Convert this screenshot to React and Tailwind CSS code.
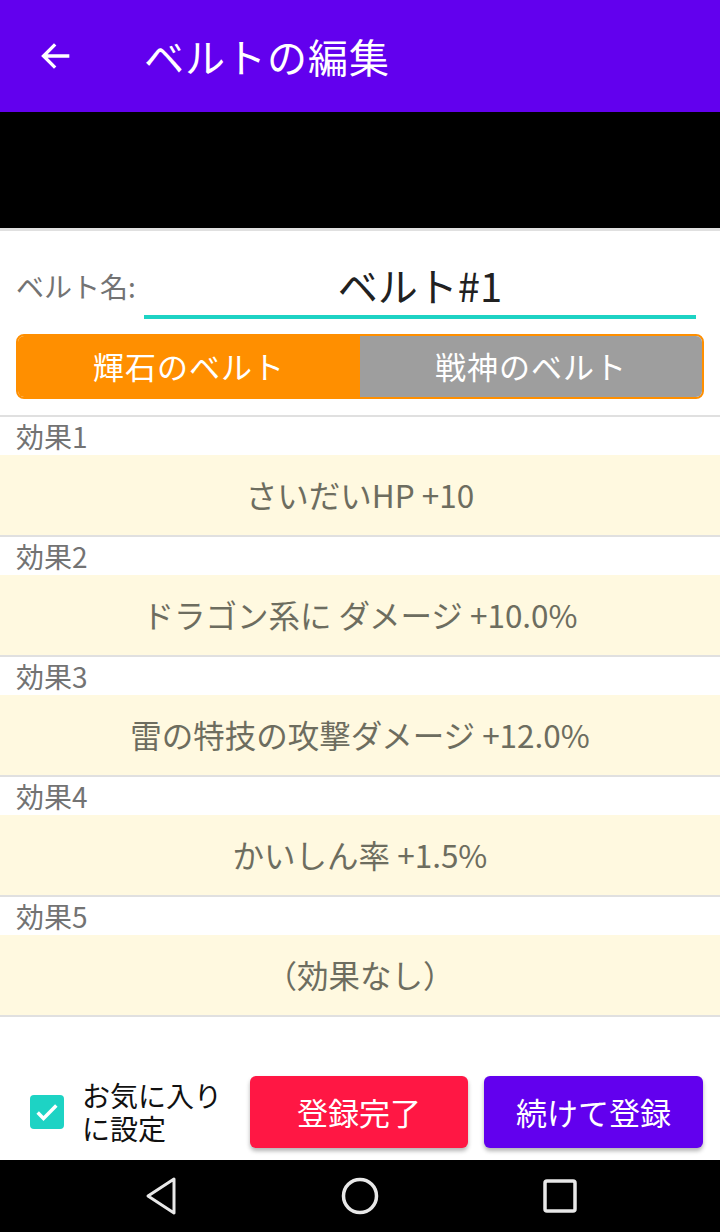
import React from "react";

const effects = [
  { label: "効果1", value: "さいだいHP +10" },
  { label: "効果2", value: "ドラゴン系に ダメージ +10.0%" },
  { label: "効果3", value: "雷の特技の攻撃ダメージ +12.0%" },
  { label: "効果4", value: "かいしん率 +1.5%" },
  { label: "効果5", value: "（効果なし）" },
];

const font = { fontFamily: '"Noto Sans CJK JP", Roboto, sans-serif' };

export default function App() {
  return (
    <div className="w-[720px] h-[1232px] flex flex-col bg-white overflow-hidden" style={font}>
      {/* App bar */}
      <div className="h-[112px] bg-[#6200ee] flex items-center shrink-0">
        <svg className="ml-[36px]" width="40" height="40" viewBox="0 0 24 24" fill="none" stroke="white" strokeWidth="2">
          <path d="M20 12H4.5M11.5 5l-7 7 7 7" />
        </svg>
        <div className="ml-[68px] text-white text-[40px] leading-none tracking-[1px]">ベルトの編集</div>
      </div>

      {/* Ad area */}
      <div className="h-[116px] bg-black shrink-0" />
      <div className="h-[3px] bg-[#e0e0e0] shrink-0" />

      {/* Name */}
      <div className="flex items-end px-[16px] mt-[28px]">
        <div className="text-[28px] text-[#737373] pb-[12px] w-[128px]">ベルト名:</div>
        <div className="flex-1 border-b-[4px] border-[#1dd3c4] mr-[8px] pb-[4px] text-center text-[40px] text-[#212121] leading-[52px]">
          ベルト#1
        </div>
      </div>

      {/* Toggle */}
      <div className="mx-[16px] mt-[15px] h-[65px] flex rounded-[8px] border-[2px] border-[#ff8f00] overflow-hidden text-[31px] text-white tracking-[1px]">
        <div className="flex-1 bg-[#ff8f00] flex items-center justify-center">輝石のベルト</div>
        <div className="flex-1 bg-[#9e9e9e] flex items-center justify-center">戦神のベルト</div>
      </div>

      <div className="h-[2px] bg-[#e0e0e0] mt-[16px]" />

      {/* Effects */}
      {effects.map((e) => (
        <div key={e.label} className="flex flex-col">
          <div className="h-[38px] px-[16px] flex items-center text-[28px] text-[#737373]">{e.label}</div>
          <div className="h-[80px] bg-[#fff9e0] flex items-center justify-center text-[31.5px] text-[#6d6d5f]">{e.value}</div>
          <div className="h-[2px] bg-[#e0e0e0]" />
        </div>
      ))}

      <div className="flex-1" />

      {/* Bottom actions */}
      <div className="flex items-center px-[16px] pb-[12px] gap-[16px]">
        <div className="flex items-center w-[218px] shrink-0">
          <div className="ml-[14px] w-[34px] h-[34px] shrink-0 rounded-[4px] bg-[#1dd3c4] flex items-center justify-center">
            <svg width="28" height="28" viewBox="0 0 24 24" fill="none" stroke="white" strokeWidth="3">
              <path d="M4 12.5l5 5L20 6.5" />
            </svg>
          </div>
          <div className="ml-[18px] flex flex-col text-[28px] leading-[33px] text-[#111] whitespace-nowrap">
            <span>お気に入り</span>
            <span>に設定</span>
          </div>
        </div>
        <button className="w-[218px] h-[72px] shrink-0 rounded-[6px] bg-[#ff1744] text-white text-[31px] shadow-[0_3px_4px_rgba(0,0,0,0.3)]">登録完了</button>
        <button className="w-[219px] h-[72px] shrink-0 rounded-[6px] bg-[#6200ee] text-white text-[31px] shadow-[0_3px_4px_rgba(0,0,0,0.3)]">続けて登録</button>
      </div>

      {/* Nav bar */}
      <div className="h-[72px] bg-black flex items-center justify-between px-[140px] shrink-0">
        <svg width="40" height="40" viewBox="0 0 40 40" fill="none" stroke="#e8e8e8" strokeWidth="3" strokeLinejoin="round">
          <path d="M34 3L8 20l26 17z" />
        </svg>
        <svg width="40" height="40" viewBox="0 0 40 40" fill="none" stroke="#e8e8e8" strokeWidth="3.5">
          <circle cx="20" cy="20" r="16.5" />
        </svg>
        <svg width="40" height="40" viewBox="0 0 40 40" fill="none" stroke="#e8e8e8" strokeWidth="3.5">
          <rect x="5" y="5" width="30" height="30" rx="2" />
        </svg>
      </div>
    </div>
  );
}
